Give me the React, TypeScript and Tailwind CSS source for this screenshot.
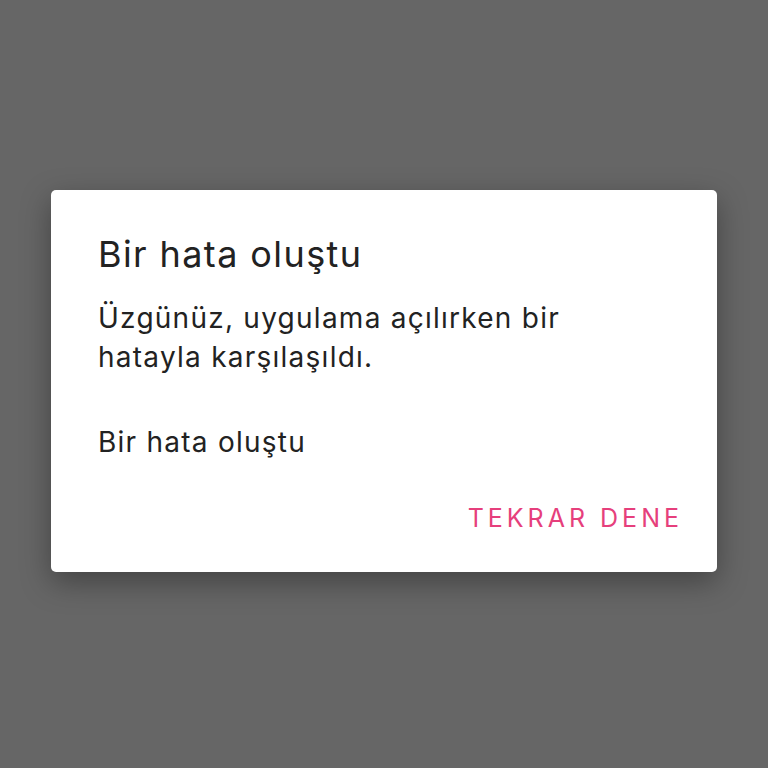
export default function App() {
  return (
    <div className="flex min-h-screen w-full items-start justify-center bg-[#666666] pt-[190px] font-['Inter','Noto_Sans',sans-serif]">
      <div className="w-[666px] rounded-[5px] bg-white pb-[35px] pl-[47px] pr-[34px] pt-[42px] shadow-[0_10px_30px_rgba(0,0,0,0.35)]">
        <h2 className="text-[36px] leading-[44px] tracking-[1.4px] font-normal text-[#222222]">Bir hata oluştu</h2>
        <p className="mt-[23px] text-[28px] leading-[39px] tracking-[1.25px] text-[#222222]">
          Üzgünüz, uygulama açılırken bir
          <br />
          hatayla karşılaşıldı.
        </p>
        <p className="mt-[46px] text-[28px] leading-[39px] tracking-[1.25px] text-[#222222]">Bir hata oluştu</p>
        <div className="mt-[37px] flex justify-end">
          <button className="text-[25px] leading-[38px] tracking-[4px] text-[#e63f7c]">TEKRAR DENE</button>
        </div>
      </div>
    </div>
  );
}
